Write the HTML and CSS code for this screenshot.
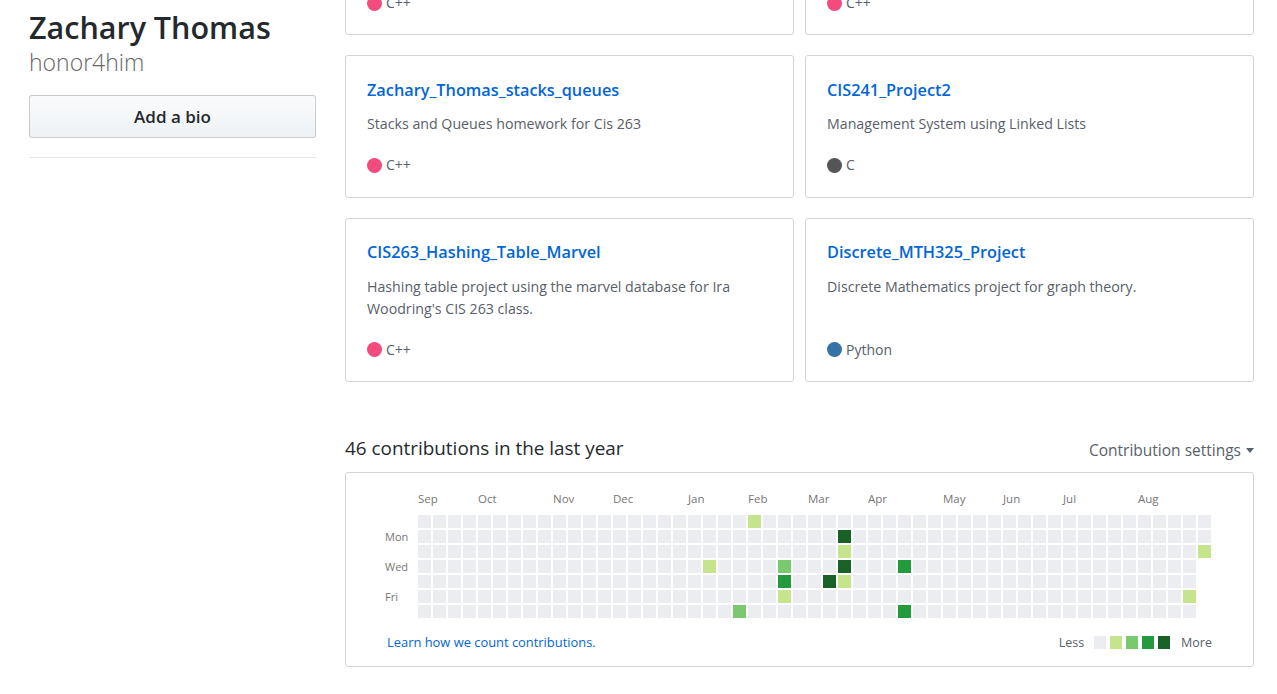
FILE: index.html
```html
<!DOCTYPE html>
<html lang="en">
<head>
<meta charset="utf-8">
<title>honor4him (Zachary Thomas)</title>
<link rel="stylesheet" href="styles.css">
</head>
<body>
<div class="page">
  <aside class="sidebar">
    <h1 class="vcard-names">
      <span class="fullname">Zachary Thomas</span>
      <span class="username">honor4him</span>
    </h1>
    <button class="btn-bio" type="button">Add a bio</button>
    <div class="divider"></div>
  </aside>

  <main class="main">
    <div class="pinned">
      <div class="card card-stub">
        <p class="repo-lang"><span class="lang-dot cpp"></span>C++</p>
      </div>
      <div class="card card-stub">
        <p class="repo-lang"><span class="lang-dot cpp"></span>C++</p>
      </div>

      <div class="card">
        <a class="repo-name" href="#">Zachary_Thomas_stacks_queues</a>
        <p class="repo-desc">Stacks and Queues homework for Cis 263</p>
        <p class="repo-lang"><span class="lang-dot cpp"></span>C++</p>
      </div>
      <div class="card">
        <a class="repo-name" href="#">CIS241_Project2</a>
        <p class="repo-desc">Management System using Linked Lists</p>
        <p class="repo-lang"><span class="lang-dot c"></span>C</p>
      </div>

      <div class="card">
        <a class="repo-name" href="#">CIS263_Hashing_Table_Marvel</a>
        <p class="repo-desc">Hashing table project using the marvel database for Ira Woodring's CIS 263 class.</p>
        <p class="repo-lang"><span class="lang-dot cpp"></span>C++</p>
      </div>
      <div class="card">
        <a class="repo-name" href="#">Discrete_MTH325_Project</a>
        <p class="repo-desc">Discrete Mathematics project for graph theory.</p>
        <p class="repo-lang"><span class="lang-dot python"></span>Python</p>
      </div>
    </div>

    <section class="contrib">
      <div class="contrib-head">
        <h2 class="contrib-title">46 contributions in the last year</h2>
        <span class="contrib-settings">Contribution settings<span class="caret"></span></span>
      </div>
      <div class="graph-box">
        <div class="graph-inner">
          <div class="months">
            <span class="month" style="grid-column: 1 / span 4">Sep</span>
            <span class="month" style="grid-column: 5 / span 4">Oct</span>
            <span class="month" style="grid-column: 10 / span 4">Nov</span>
            <span class="month" style="grid-column: 14 / span 4">Dec</span>
            <span class="month" style="grid-column: 19 / span 4">Jan</span>
            <span class="month" style="grid-column: 23 / span 4">Feb</span>
            <span class="month" style="grid-column: 27 / span 4">Mar</span>
            <span class="month" style="grid-column: 31 / span 4">Apr</span>
            <span class="month" style="grid-column: 36 / span 4">May</span>
            <span class="month" style="grid-column: 40 / span 4">Jun</span>
            <span class="month" style="grid-column: 44 / span 4">Jul</span>
            <span class="month" style="grid-column: 49 / span 4">Aug</span>
          </div>
          <div class="graph-body">
            <div class="days">
              <span></span>
              <span>Mon</span>
              <span></span>
              <span>Wed</span>
              <span></span>
              <span>Fri</span>
              <span></span>
            </div>
            <div class="cal" id="cal"></div>
          </div>
          <div class="contrib-footer">
            <a class="learn" href="#">Learn how we count contributions.</a>
            <div class="legend">
              <span class="legend-text">Less</span>
              <span class="lg-cells">
                <i class="day l0"></i><i class="day l1"></i><i class="day l2"></i><i class="day l3"></i><i class="day l4"></i>
              </span>
              <span class="legend-text more">More</span>
            </div>
          </div>
        </div>
      </div>
    </section>
  </main>
</div>
<script src="script.js"></script>
</body>
</html>
```

FILE: styles.css
```css
* { box-sizing: border-box; }

body {
  margin: 0;
  background: #fff;
  color: #24292e;
  font-family: "Open Sans", "Noto Sans", sans-serif;
  overflow: hidden;
}

.page {
  display: flex;
  gap: 29px;
  padding-left: 29px;
  align-items: flex-start;
}

/* Sidebar */
.sidebar {
  width: 287px;
  flex: none;
}

.vcard-names {
  margin: 7px 0 0;
  display: flex;
  flex-direction: column;
  font-weight: normal;
}

.fullname {
  font-size: 30.5px;
  line-height: 40px;
  font-weight: 600;
  color: #24292e;
}

.username {
  font-size: 23px;
  line-height: 30px;
  font-weight: 300;
  color: #666;
}

.btn-bio {
  display: block;
  width: 100%;
  height: 43px;
  margin-top: 18px;
  border: 1px solid rgba(27, 31, 35, 0.2);
  border-radius: 3px;
  background: linear-gradient(#fafbfc, #eff3f6 90%);
  font-family: inherit;
  font-size: 17px;
  font-weight: 600;
  color: #24292e;
}

.divider {
  margin-top: 19px;
  height: 1px;
  background: #e1e4e8;
}

/* Main */
.main {
  width: 909px;
  flex: none;
  margin-top: -29px;
}

.pinned {
  display: grid;
  grid-template-columns: 1fr 1fr;
  column-gap: 11px;
  row-gap: 20px;
}

.card {
  display: flex;
  flex-direction: column;
  border: 1px solid #d1d5da;
  border-radius: 3px;
  padding: 20.5px 21px 20.5px 21px;
  background: #fff;
}

.card-stub { padding: 20px 21px; }

.repo-name {
  font-size: 16.3px;
  line-height: 27px;
  font-weight: 600;
  color: #0366d6;
  text-decoration: none;
}

.repo-desc {
  margin: 9.5px 0 0;
  flex: 1;
  font-size: 14.2px;
  line-height: 22px;
  color: #586069;
}

.repo-lang {
  margin: 19px 0 0;
  display: flex;
  align-items: center;
  gap: 4px;
  font-size: 14px;
  line-height: 22px;
  color: #586069;
}

.card-stub .repo-lang { margin-top: 0; }

.lang-dot {
  width: 15px;
  height: 15px;
  border-radius: 50%;
  flex: none;
}
.lang-dot.cpp { background: #f34b7d; }
.lang-dot.c { background: #555555; }
.lang-dot.python { background: #3572a5; }

/* Contributions */
.contrib { margin-top: 51px; }

.contrib-head {
  display: flex;
  justify-content: space-between;
  align-items: center;
  margin-bottom: 9px;
}

.contrib-title {
  margin: 0;
  font-size: 18.9px;
  line-height: 30px;
  font-weight: 400;
  color: #24292e;
}

.contrib-settings {
  display: flex;
  align-items: center;
  font-size: 15.5px;
  line-height: 20px;
  color: #586069;
  margin-top: 4px;
}

.caret {
  margin-left: 5px;
  width: 0;
  height: 0;
  border-left: 4px solid transparent;
  border-right: 4px solid transparent;
  border-top: 5px solid #586069;
}

.graph-box {
  border: 1px solid #d1d5da;
  border-radius: 3px;
  padding: 18px 0 14px 39px;
}

.graph-inner { width: 827px; }

.months {
  display: grid;
  grid-template-columns: repeat(53, 13px);
  column-gap: 2px;
  margin-left: 33px;
  margin-bottom: 9px;
  height: 15px;
}

.month {
  font-size: 11.5px;
  line-height: 15px;
  color: #767676;
  white-space: nowrap;
}

.graph-body { display: flex; }

.days {
  width: 33px;
  display: grid;
  grid-template-rows: repeat(7, 13px);
  row-gap: 2px;
  font-size: 11px;
  line-height: 13px;
  color: #767676;
}

.cal {
  display: grid;
  grid-template-rows: repeat(7, 13px);
  grid-auto-columns: 13px;
  grid-auto-flow: column;
  gap: 2px;
}

.day {
  display: block;
  width: 13px;
  height: 13px;
  background: #ebedf0;
}
.day.l1 { background: #c6e48b; }
.day.l2 { background: #7bc96f; }
.day.l3 { background: #239a3b; }
.day.l4 { background: #196127; }

.contrib-footer {
  display: flex;
  justify-content: space-between;
  align-items: center;
  margin-top: 14px;
  height: 20px;
  padding-left: 2px;
}

.learn {
  font-size: 12.9px;
  color: #0366d6;
  text-decoration: none;
}

.legend {
  display: flex;
  align-items: center;
  font-size: 12.5px;
  color: #586069;
}

.lg-cells {
  display: flex;
  gap: 4px;
  margin: 0 11px 0 10px;
}
.lg-cells .day { width: 12px; height: 13px; }
```

FILE: script.js
```js
(function () {
  var levels = {
    "22,0": 1, "28,1": 4, "28,2": 1, "52,2": 1,
    "19,3": 1, "24,3": 2, "28,3": 4, "32,3": 3,
    "24,4": 3, "27,4": 4, "28,4": 1,
    "24,5": 1, "51,5": 1,
    "21,6": 2, "32,6": 3
  };
  var cal = document.getElementById("cal");
  var html = "";
  for (var w = 0; w < 53; w++) {
    var rows = w === 52 ? 3 : 7;
    for (var d = 0; d < rows; d++) {
      var lv = levels[w + "," + d] || 0;
      html += '<i class="day l' + lv + '"></i>';
    }
  }
  cal.innerHTML = html;
})();
```
